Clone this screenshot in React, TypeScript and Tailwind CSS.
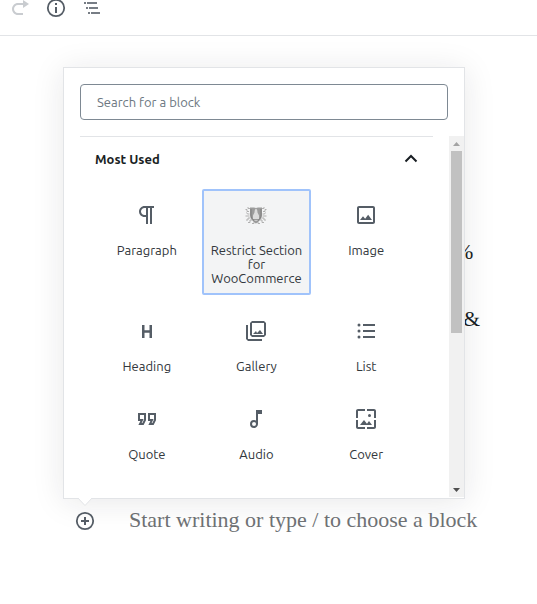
import type { ReactNode } from "react";

function Icon({ children, size = 24, box = "0 0 24 24" }: { children: ReactNode; size?: number; box?: string }) {
  return (
    <svg width={size} height={size} viewBox={box} fill="currentColor" aria-hidden="true">
      {children}
    </svg>
  );
}

function ShieldIcon() {
  return (
    <Icon>
      <g stroke="#b0b0b0" fill="none" strokeWidth="1">
        <path d="M6 5.500H4V4M5 8.500H3V6.500H1.500M5.500 11H3.500L2.500 9.500M5.500 13H1.500M6.500 15H4v2H2M8 17H6v2.500H4M10 19v1.500H8M18 5.500h2V4M19 8.500h2V6.500h1.500M18.500 11h2l1-1.500M18.500 13h4M17.500 15H20v2h2M16 17h2v2.500h2M14 19v1.500h2" />
      </g>
      <path d="M6 4.500h4l2 .5 2-.5h4V12c0 3.500-2.500 6.500-6 8.500C8.500 18.500 6 15.500 6 12z" fill="#9c9c9c" />
      <path d="M7 6v6c0 2.500 1.500 4.500 3.500 6M17 6v6c0 2.500-1.500 4.500-3.500 6" fill="none" stroke="#808080" />
      <path d="M12 5.500c-1 .8-1.500 2-1.500 4L9 12.500V16h6v-3.500l-1.500-3c0-2-.5-3.200-1.500-4z" fill="#dcdcdc" />
      <path d="M10.500 17.500h3" stroke="#c8c8c8" />
    </Icon>
  );
}

const blocks: { name: string; selected?: boolean; icon: ReactNode }[] = [
  {
    name: "Paragraph",
    icon: (
      <Icon>
        <path d="M11 5v7H9.500C7.600 12 6 10.400 6 8.500S7.600 5 9.500 5H11m8-2H9.500C6.500 3 4 5.500 4 8.500S6.500 14 9.500 14H11v7h2V5h2v16h2V5h2V3z" />
      </Icon>
    ),
  },
  { name: "Restrict Section for WooCommerce", selected: true, icon: <ShieldIcon /> },
  {
    name: "Image",
    icon: (
      <Icon>
        <path d="M19 5v14H5V5h14m0-2H5c-1.100 0-2 .9-2 2v14c0 1.100.9 2 2 2h14c1.100 0 2-.9 2-2V5c0-1.100-.9-2-2-2z" />
        <path d="M14.140 11.860l-3 3.870L9 13.140 6 17h12l-3.860-5.140z" />
      </Icon>
    ),
  },
  {
    name: "Heading",
    icon: (
      <Icon size={20} box="0 0 20 20">
        <path d="M12.500 4v5.200h-5V4H5v13h2.500v-5.200h5V17H15V4" />
      </Icon>
    ),
  },
  {
    name: "Gallery",
    icon: (
      <Icon>
        <path d="M20 4v12H8V4h12m0-2H8L6 4v12l2 2h12l2-2V4l-2-2z" />
        <path d="M12 12l1 2 3-3 3 4H9z" />
        <path d="M2 6v14l2 2h14v-2H4V6H2z" />
      </Icon>
    ),
  },
  {
    name: "List",
    icon: (
      <Icon>
        <path d="M9 19h12v-2H9v2zm0-6h12v-2H9v2zm0-8v2h12V5H9z" />
        <circle cx="5" cy="6" r="1.500" />
        <circle cx="5" cy="12" r="1.500" />
        <circle cx="5" cy="18" r="1.500" />
      </Icon>
    ),
  },
  {
    name: "Quote",
    icon: (
      <Icon>
        <path d="M18.620 18h-5.240l2-4H13V6h8v7.240L18.620 18zm-2-2h.76L19 12.760V8h-4v4h3.620l-2 4zm-8 2H3.380l2-4H3V6h8v7.240L8.620 18zm-2-2h.76L9 12.760V8H5v4h3.620l-2 4z" />
      </Icon>
    ),
  },
  {
    name: "Audio",
    icon: (
      <Icon>
        <path d="M12 3l.01 10.550c-.59-.34-1.270-.55-2-.55a4 4 0 1 0 0 8C12.220 21 14 19.210 14 17V7h4V3h-6zm-1.990 16a2 2 0 1 1 0-4 2 2 0 0 1 0 4z" />
      </Icon>
    ),
  },
  {
    name: "Cover",
    icon: (
      <Icon>
        <path d="M4 4h7V2H4c-1.100 0-2 .9-2 2v7h2V4zm6 9l-4 5h12l-3-4-2.030 2.710L10 13zm7-4.500a1.500 1.500 0 1 0-3 0 1.500 1.500 0 0 0 3 0zM20 2h-7v2h7v7h2V4c0-1.100-.9-2-2-2zm0 18h-7v2h7c1.100 0 2-.9 2-2v-7h-2v7zM4 13H2v7c0 1.100.9 2 2 2h7v-2H4v-7z" />
      </Icon>
    ),
  },
];

function Toolbar() {
  return (
    <header className="flex h-9 items-start overflow-hidden border-b border-[#e2e4e7] pl-0.5 text-[#555d66]">
      <button aria-label="Redo" disabled className="-mt-1 flex h-6 w-9 items-center justify-center text-[#c9ccd0]">
        <Icon size={20} box="0 0 20 20">
          <path d="M8 5h5V2l6 4-6 4V7H8c-2.200 0-4 1.800-4 4s1.800 4 4 4h5v2H8c-3.300 0-6-2.700-6-6s2.700-6 6-6z" />
        </Icon>
      </button>
      <button aria-label="Content structure" className="-mt-1 flex h-6 w-9 items-center justify-center">
        <Icon>
          <circle cx="12" cy="12" r="8.200" fill="none" stroke="currentColor" strokeWidth="1.800" />
          <path d="M11 7h2v2h-2zM11 11h2v6h-2z" />
        </Icon>
      </button>
      <button aria-label="Block navigation" className="-mt-1 flex h-6 w-9 items-center justify-center">
        <Icon>
          <path d="M4 6h2v2H4zM7 6h10v2H7zM6 11h2v2H6zM9 11h9v2H9zM8 16h2v2H8zM11 16h9v2h-9z" opacity=".8" />
        </Icon>
      </button>
    </header>
  );
}

function Scrollbar() {
  return (
    <div aria-hidden="true" className="flex w-[15px] shrink-0 flex-col items-center bg-[#f1f1f1]">
      <svg width="15" height="15" viewBox="0 0 15 15">
        <path d="M4 10l3.500-4 3.500 4z" fill="#a3a3a3" />
      </svg>
      <div className="h-[182px] w-[11px] bg-[#c1c1c1]" />
      <svg width="15" height="15" viewBox="0 0 15 15" className="mt-auto">
        <path d="M4 6l3.500 4L11 6z" fill="#505050" />
      </svg>
    </div>
  );
}

function BlockPicker() {
  return (
    <div className="absolute bottom-full -left-3 mb-3 w-[402px] border border-[#e2e4e7] bg-white pb-px shadow-[0_3px_30px_rgba(25,30,35,0.1)]">
      <div className="p-4">
        <input
          type="text"
          aria-label="Search for a block"
          placeholder="Search for a block"
          className="block h-9 w-full rounded border border-[#7e8993] px-4 text-[13px] outline-none placeholder:text-[#6c7781]"
        />
      </div>
      <div className="flex h-[361px] overflow-hidden pl-4">
        <section className="mr-4 flex-1 border-t border-[#e2e4e7]">
          <h2>
            <button aria-expanded="true" className="flex h-11 w-full items-center justify-between px-[15px] text-[13px] font-bold text-[#191e23]">
              Most Used
              <svg width="14" height="14" viewBox="0 0 14 14" fill="none" stroke="currentColor" strokeWidth="2" aria-hidden="true">
                <path d="M1.500 9.500L7 4l5.500 5.500" />
              </svg>
            </button>
          </h2>
          <ul className="grid grid-cols-3 items-start gap-y-2.5 px-3 pt-2">
            {blocks.map((block) => (
              <li key={block.name}>
                <button
                  className={
                    block.selected
                      ? "flex w-full flex-col items-center rounded-xs border-2 border-[#a0c3fb] bg-[#f3f4f5] pt-3 pb-2 text-[13px] leading-[14px] text-[#32373c]"
                      : "flex w-full flex-col items-center rounded-xs border-2 border-transparent pt-3 pb-2 text-[13px] leading-[14px] text-[#32373c]"
                  }
                >
                  <span className="mb-4 flex h-6 items-center text-[#555d66]">{block.icon}</span>
                  {block.name}
                </button>
              </li>
            ))}
          </ul>
        </section>
        <Scrollbar />
      </div>
      <svg width="18" height="9" viewBox="0 0 18 9" className="absolute top-full left-3" aria-hidden="true">
        <path d="M1 -1L9 7.500L17 -1" fill="white" stroke="#e2e4e7" />
      </svg>
    </div>
  );
}

export default function App() {
  return (
    <div className="min-h-screen bg-white font-['Ubuntu','Noto_Sans',sans-serif]">
      <Toolbar />
      <main className="pt-[202px] font-['Liberation_Serif',serif] text-[22px] leading-7 text-[#191e23]">
        <p className="pl-[455px]">%</p>
        <p className="mt-[39px] pl-[463px]">&amp;</p>
        <div className="mt-[176px] flex items-end pl-[75px]">
          <div className="relative flex font-['Ubuntu','Noto_Sans',sans-serif]">
            <button aria-label="Add block" className="flex size-5 items-center justify-center text-[#555d66]">
              <Icon size={20} box="0 0 20 20">
                <circle cx="10" cy="10" r="8.200" fill="none" stroke="currentColor" strokeWidth="1.800" />
                <path d="M9 6h2v3h3v2h-3v3H9v-3H6V9h3z" />
              </Icon>
            </button>
            <BlockPicker />
          </div>
          <p className="ml-[34px] leading-[22px] text-[#6f7275]">Start writing or type / to choose a block</p>
        </div>
      </main>
    </div>
  );
}
